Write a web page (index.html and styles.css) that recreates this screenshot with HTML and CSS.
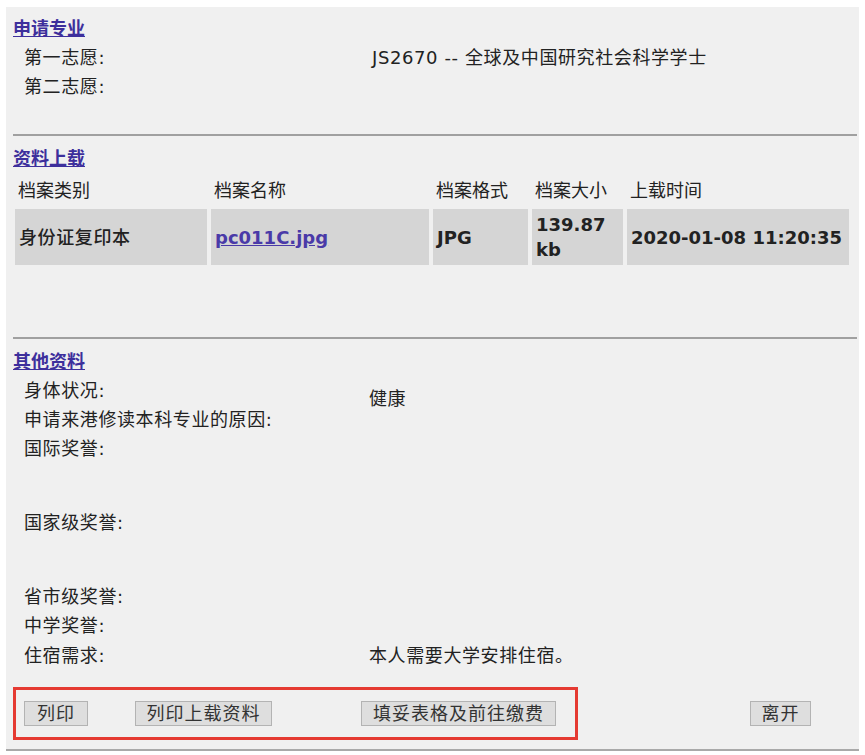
FILE: index.html
```html
<!DOCTYPE html>
<html lang="zh-CN">
<head>
<meta charset="utf-8">
<title>申请资料</title>
<link rel="stylesheet" href="styles.css">
</head>
<body>
<div class="page">
  <section class="sec sec-first">
    <h2 class="head"><a href="#">申请专业</a></h2>
    <div class="row"><div class="k">第一志愿:</div><div class="v">JS2670 -- 全球及中国研究社会科学学士</div></div>
    <div class="row"><div class="k">第二志愿:</div><div class="v"></div></div>
  </section>
  <div class="sep sep-one"></div>
  <section class="sec">
    <h2 class="head"><a href="#">资料上载</a></h2>
    <div class="files">
      <div class="th">档案类别</div>
      <div class="th">档案名称</div>
      <div class="th">档案格式</div>
      <div class="th">档案大小</div>
      <div class="th">上载时间</div>
      <div class="td td-cjk">身份证复印本</div>
      <div class="td"><a href="#">pc011C.jpg</a></div>
      <div class="td">JPG</div>
      <div class="td">139.87 kb</div>
      <div class="td nowrap">2020-01-08 11:20:35</div>
    </div>
  </section>
  <div class="sep sep-two"></div>
  <section class="sec sec-other">
    <h2 class="head"><a href="#">其他资料</a></h2>
    <div class="row"><div class="k k2">身体状况:</div><div class="v v-low">健康</div></div>
    <div class="row"><div class="k k2">申请来港修读本科专业的原因:</div><div class="v"></div></div>
    <div class="row row-tall"><div class="k k2">国际奖誉:</div><div class="v"></div></div>
    <div class="row row-tall"><div class="k k2">国家级奖誉:</div><div class="v"></div></div>
    <div class="row"><div class="k k2">省市级奖誉:</div><div class="v"></div></div>
    <div class="row row-30"><div class="k k2">中学奖誉:</div><div class="v"></div></div>
    <div class="row row-30"><div class="k k2">住宿需求:</div><div class="v">本人需要大学安排住宿。</div></div>
  </section>
  <div class="actions">
    <div class="mark">
      <button class="btn btn-print" type="button">列印</button>
      <button class="btn btn-print-up" type="button">列印上载资料</button>
      <button class="btn btn-pay" type="button">填妥表格及前往缴费</button>
    </div>
    <button class="btn btn-leave" type="button">离开</button>
  </div>
</div>
</body>
</html>
```

FILE: styles.css
```css
* { box-sizing: border-box; }

html, body {
  margin: 0;
  padding: 0;
  background: #ffffff;
}

body {
  font-family: "DejaVu Sans", "Noto Sans CJK SC", sans-serif;
  font-size: 18px;
  color: #222222;
}

.page {
  margin: 7px 0 0 6px;
  width: 853px;
  background: #f0f0f0;
  padding: 7px 2px 9px 7px;
  border-bottom: 2px solid #a9a9a9;
}

.head {
  margin: 0;
  height: 29px;
  line-height: 29px;
  font-size: 18px;
  font-weight: bold;
}

.head a {
  color: #3d2f9c;
  text-decoration: underline;
}

.row {
  display: flex;
  height: 29px;
  line-height: 29px;
  padding-left: 11px;
  letter-spacing: 0.6px;
}

.row-tall { height: 74px; }
.row-30 { height: 30px; }

.k {
  width: 348px;
  flex: none;
  white-space: nowrap;
}

.k2 { width: 345px; }

.v { white-space: nowrap; }

.v-low { margin-top: 8px; }

.sep {
  height: 2px;
  background: #a0a0a0;
}

.sep-one { margin-top: 33px; }
.sep-two { margin-top: 72px; }

.sec { padding-top: 8px; }
.sec-first { padding-top: 0; }

.files {
  display: grid;
  grid-template-columns: 192px 218px 95px 91px 222px;
  column-gap: 4px;
  row-gap: 4px;
  margin: 4px 0 0 2px;
}

.th {
  height: 28px;
  line-height: 28px;
  padding-left: 3px;
  white-space: nowrap;
}

.td {
  height: 56px;
  background: #d5d5d5;
  display: flex;
  align-items: center;
  padding: 0 4px;
  font-weight: bold;
  line-height: 25px;
}

.td-cjk {
  font-weight: 500;
  letter-spacing: 0.6px;
}

.td a {
  color: #4a3aa8;
  text-decoration: underline;
}

.nowrap { white-space: nowrap; }

.actions {
  display: flex;
  align-items: center;
  margin-top: 16px;
}

.mark {
  display: flex;
  align-items: center;
  height: 53px;
  border: 3px solid #e53a32;
  padding: 0 19px 0 8px;
}

.btn {
  font-family: "DejaVu Sans", "Noto Sans CJK SC", sans-serif;
  font-size: 18px;
  letter-spacing: 1px;
  color: #333333;
  height: 25px;
  line-height: 23px;
  padding: 0;
  background: #dedede;
  border: 1px solid #b3b3b3;
  border-radius: 0;
  margin: 0;
}

.btn-print { width: 64px; margin-right: 47px; }
.btn-print-up { width: 137px; margin-right: 89px; }
.btn-pay { width: 195px; }
.btn-leave { width: 61px; margin-left: 172px; }
```
